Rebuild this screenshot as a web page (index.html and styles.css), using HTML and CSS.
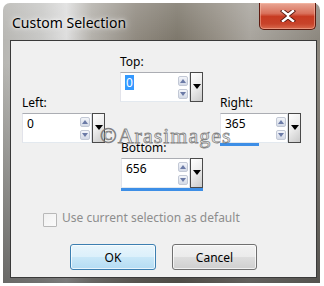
FILE: index.html
```html
<!DOCTYPE html>
<html lang="en">
<head>
  <meta charset="UTF-8">
  <meta name="viewport" content="width=device-width, initial-scale=1.0">
  <title>Custom Selection</title>
  <link rel="stylesheet" href="styles.css">
</head>
<body>
  <div class="window">
    <!-- Заголовок окна -->
    <div class="titlebar">
      <span class="title">Custom Selection</span>
      <button class="close" title="Close">
        <svg width="16" height="12" viewBox="0 0 16 12">
          <path d="M3 1 L8 5 L13 1 M3 11 L8 7 L13 11 M8 5 L8 7" fill="none" stroke="#5a1a10" stroke-width="4.2" stroke-linecap="square"/>
          <path d="M3 1 L8 5 L13 1 M3 11 L8 7 L13 11 M8 5 L8 7" fill="none" stroke="#ffffff" stroke-width="2.4" stroke-linecap="square"/>
        </svg>
      </button>
    </div>

    <div class="client">
      <!-- Поля координат -->
      <div class="fields">
        <div class="group side">
          <label class="caption" for="left">Left:</label>
          <div class="spin">
            <div class="entry"><span class="value" id="left">0</span>
              <div class="arrows">
                <span class="arrow"><svg width="6" height="4" viewBox="0 0 6 4"><path d="M0 4 L3 0 L6 4 Z" fill="#6b7aa6"/></svg></span>
                <span class="arrow"><svg width="6" height="4" viewBox="0 0 6 4"><path d="M0 0 L6 0 L3 4 Z" fill="#6b7aa6"/></svg></span>
              </div>
            </div>
            <div class="drop"><svg width="8" height="5" viewBox="0 0 8 5"><path d="M0 0 L8 0 L4 5 Z" fill="#000"/></svg></div>
          </div>
        </div>

        <div class="middle">
          <div class="group">
            <label class="caption" for="top">Top:</label>
            <div class="spin">
              <div class="entry"><span class="value" id="top"><span class="selected">0</span></span>
                <div class="arrows">
                  <span class="arrow"><svg width="6" height="4" viewBox="0 0 6 4"><path d="M0 4 L3 0 L6 4 Z" fill="#6b7aa6"/></svg></span>
                  <span class="arrow"><svg width="6" height="4" viewBox="0 0 6 4"><path d="M0 0 L6 0 L3 4 Z" fill="#6b7aa6"/></svg></span>
                </div>
              </div>
              <div class="drop"><svg width="8" height="5" viewBox="0 0 8 5"><path d="M0 0 L8 0 L4 5 Z" fill="#000"/></svg></div>
            </div>
          </div>

          <div class="group">
            <label class="caption" for="bottom">Bottom:</label>
            <div class="spin">
              <div class="entry"><span class="value" id="bottom">656</span>
                <div class="arrows">
                  <span class="arrow"><svg width="6" height="4" viewBox="0 0 6 4"><path d="M0 4 L3 0 L6 4 Z" fill="#6b7aa6"/></svg></span>
                  <span class="arrow"><svg width="6" height="4" viewBox="0 0 6 4"><path d="M0 0 L6 0 L3 4 Z" fill="#6b7aa6"/></svg></span>
                </div>
              </div>
              <div class="drop"><svg width="8" height="5" viewBox="0 0 8 5"><path d="M0 0 L8 0 L4 5 Z" fill="#000"/></svg></div>
            </div>
            <div class="bar"><div class="fill" style="width: 100%"></div></div>
          </div>
        </div>

        <div class="group side">
          <label class="caption" for="right">Right:</label>
          <div class="spin">
            <div class="entry"><span class="value" id="right">365</span>
              <div class="arrows">
                <span class="arrow"><svg width="6" height="4" viewBox="0 0 6 4"><path d="M0 4 L3 0 L6 4 Z" fill="#6b7aa6"/></svg></span>
                <span class="arrow"><svg width="6" height="4" viewBox="0 0 6 4"><path d="M0 0 L6 0 L3 4 Z" fill="#6b7aa6"/></svg></span>
              </div>
            </div>
            <div class="drop"><svg width="8" height="5" viewBox="0 0 8 5"><path d="M0 0 L8 0 L4 5 Z" fill="#000"/></svg></div>
          </div>
          <div class="bar"><div class="fill" style="width: 48%"></div></div>
        </div>
      </div>

      <!-- Флажок -->
      <label class="default-check"><span class="checkbox"></span>Use current selection as default</label>

      <!-- Кнопки -->
      <div class="actions">
        <button class="btn ok">OK</button>
        <button class="btn">Cancel</button>
      </div>

      <div class="watermark">©Arasimages</div>
    </div>
  </div>
</body>
</html>
```
FILE: styles.css
```css
body {
  margin: 0;
  background-color: #ffffff;
  font-family: "Noto Sans", "Open Sans", sans-serif;
  font-size: 12px;
  color: #000000;
}

.window {
  margin: 3px 4px 0 3px;
  height: 280px;
  padding: 0 3px 0 7px;
  border-radius: 7px 7px 0 0;
  box-sizing: border-box;
  background:
    linear-gradient(to bottom, rgba(255, 255, 255, 0.15) 0, rgba(0, 0, 0, 0) 38px, rgba(0, 0, 0, 0) 60px, rgba(40, 40, 40, 0.55) 100%),
    linear-gradient(90deg, #b7b6b2 0%, #c8c8c6 12%, #dedede 20%, #b3b0aa 28%, #8f897f 42%, #7d776b 55%, #958f85 68%, #a8a49d 78%, #8b867d 100%);
}

.titlebar {
  display: flex;
  justify-content: space-between;
  align-items: flex-start;
  height: 37px;
  padding-right: 1px;
}

.title {
  padding: 10px 0 0 2px;
  font-size: 14px;
  line-height: 19px;
  color: #000000;
  text-shadow: 0 0 6px #ffffff, 0 0 3px rgba(255, 255, 255, 0.8);
}

.close {
  display: flex;
  justify-content: center;
  align-items: center;
  width: 57px;
  height: 27px;
  padding: 0;
  border: 1px solid #5e1a0f;
  border-top: none;
  border-radius: 0 0 5px 5px;
  background: linear-gradient(to bottom, #e9a795 0%, #d9715c 40%, #c73b22 52%, #c8432a 80%, #d86a4e 100%);
  box-shadow: inset 0 0 0 1px rgba(255, 200, 180, 0.45);
}

.client {
  position: relative;
  height: 238px;
  box-sizing: border-box;
  border: 1px solid #3a3a3a;
  background-color: #f0f0f0;
}

.fields {
  display: grid;
  grid-template-columns: 83px 83px 83px;
  column-gap: 15px;
  align-items: start;
  padding: 13px 0 0 11px;
}

.middle {
  display: flex;
  flex-direction: column;
  gap: 38px;
}

.side {
  margin-top: 41px;
}

.middle .group + .group {
  margin-left: 1px;
}

.fields > .side:last-child {
  margin-left: 2px;
}

.caption {
  display: block;
  line-height: 15px;
  margin-bottom: 3px;
}

.spin {
  display: flex;
  height: 30px;
}

.entry {
  display: flex;
  justify-content: space-between;
  width: 70px;
  box-sizing: border-box;
  border: 1px solid #abadb3;
  border-color: #abadb3 #dbdfe6 #e3e9ef #e2e3ea;
  background-color: #ffffff;
}

.value {
  padding: 2px 0 0 4px;
  line-height: 15px;
}

.selected {
  display: inline-block;
  padding: 0 1px;
  background-color: #3399ff;
  color: #ffffff;
}

.arrows {
  display: flex;
  flex-direction: column;
  justify-content: space-between;
  width: 10px;
  padding: 3px 0 2px;
  margin-right: 1px;
}

.arrow {
  display: flex;
  justify-content: center;
  align-items: center;
  height: 10px;
  box-sizing: border-box;
  border: 1px solid #c3c9d6;
  border-radius: 2px;
  background: linear-gradient(to bottom, #f3f5fa, #d3d9e6);
}

.drop {
  display: flex;
  justify-content: center;
  align-items: flex-start;
  width: 13px;
  box-sizing: border-box;
  padding-top: 11px;
  border: 1px solid #4a4a4a;
  background: linear-gradient(135deg, #ffffff 0%, #eeeeee 45%, #c9c9c9 100%);
}

.bar {
  height: 3px;
}

.bar .fill {
  height: 3px;
  background-color: #3d8ee6;
}

.default-check {
  display: flex;
  align-items: flex-start;
  margin: 19px 0 0 32px;
  line-height: 15px;
  color: #8d8d8d;
}

.checkbox {
  width: 14px;
  height: 14px;
  box-sizing: border-box;
  margin: 3px 5px 0 0;
  border: 1px solid #b8b8b8;
  border-radius: 1px;
  background: linear-gradient(135deg, #f0f0f0, #fbfbfb);
}

.actions {
  display: flex;
  gap: 16px;
  margin: 17px 0 0 59px;
}

.btn {
  width: 85px;
  height: 26px;
  padding: 0;
  border: 1px solid #707070;
  border-radius: 3px;
  font-family: "Noto Sans", "Open Sans", sans-serif;
  font-size: 12px;
  color: #000000;
  background: linear-gradient(to bottom, #f2f2f2 0%, #ebebeb 48%, #dddddd 52%, #cfcfcf 100%);
  box-shadow: inset 0 0 0 1px rgba(255, 255, 255, 0.7);
}

.btn.ok {
  width: 86px;
  border-color: #3c7fb1;
  background: linear-gradient(to bottom, #e8f5fc 0%, #dcf0fb 48%, #c8e7f8 52%, #b4dcf3 100%);
}

.watermark {
  position: absolute;
  left: 89px;
  top: 82px;
  font-family: "Liberation Serif", serif;
  font-size: 22px;
  line-height: 25px;
  letter-spacing: 1px;
  color: rgba(245, 245, 245, 0.35);
  -webkit-text-stroke: 0.8px rgba(110, 110, 110, 0.85);
  pointer-events: none;
}
```
